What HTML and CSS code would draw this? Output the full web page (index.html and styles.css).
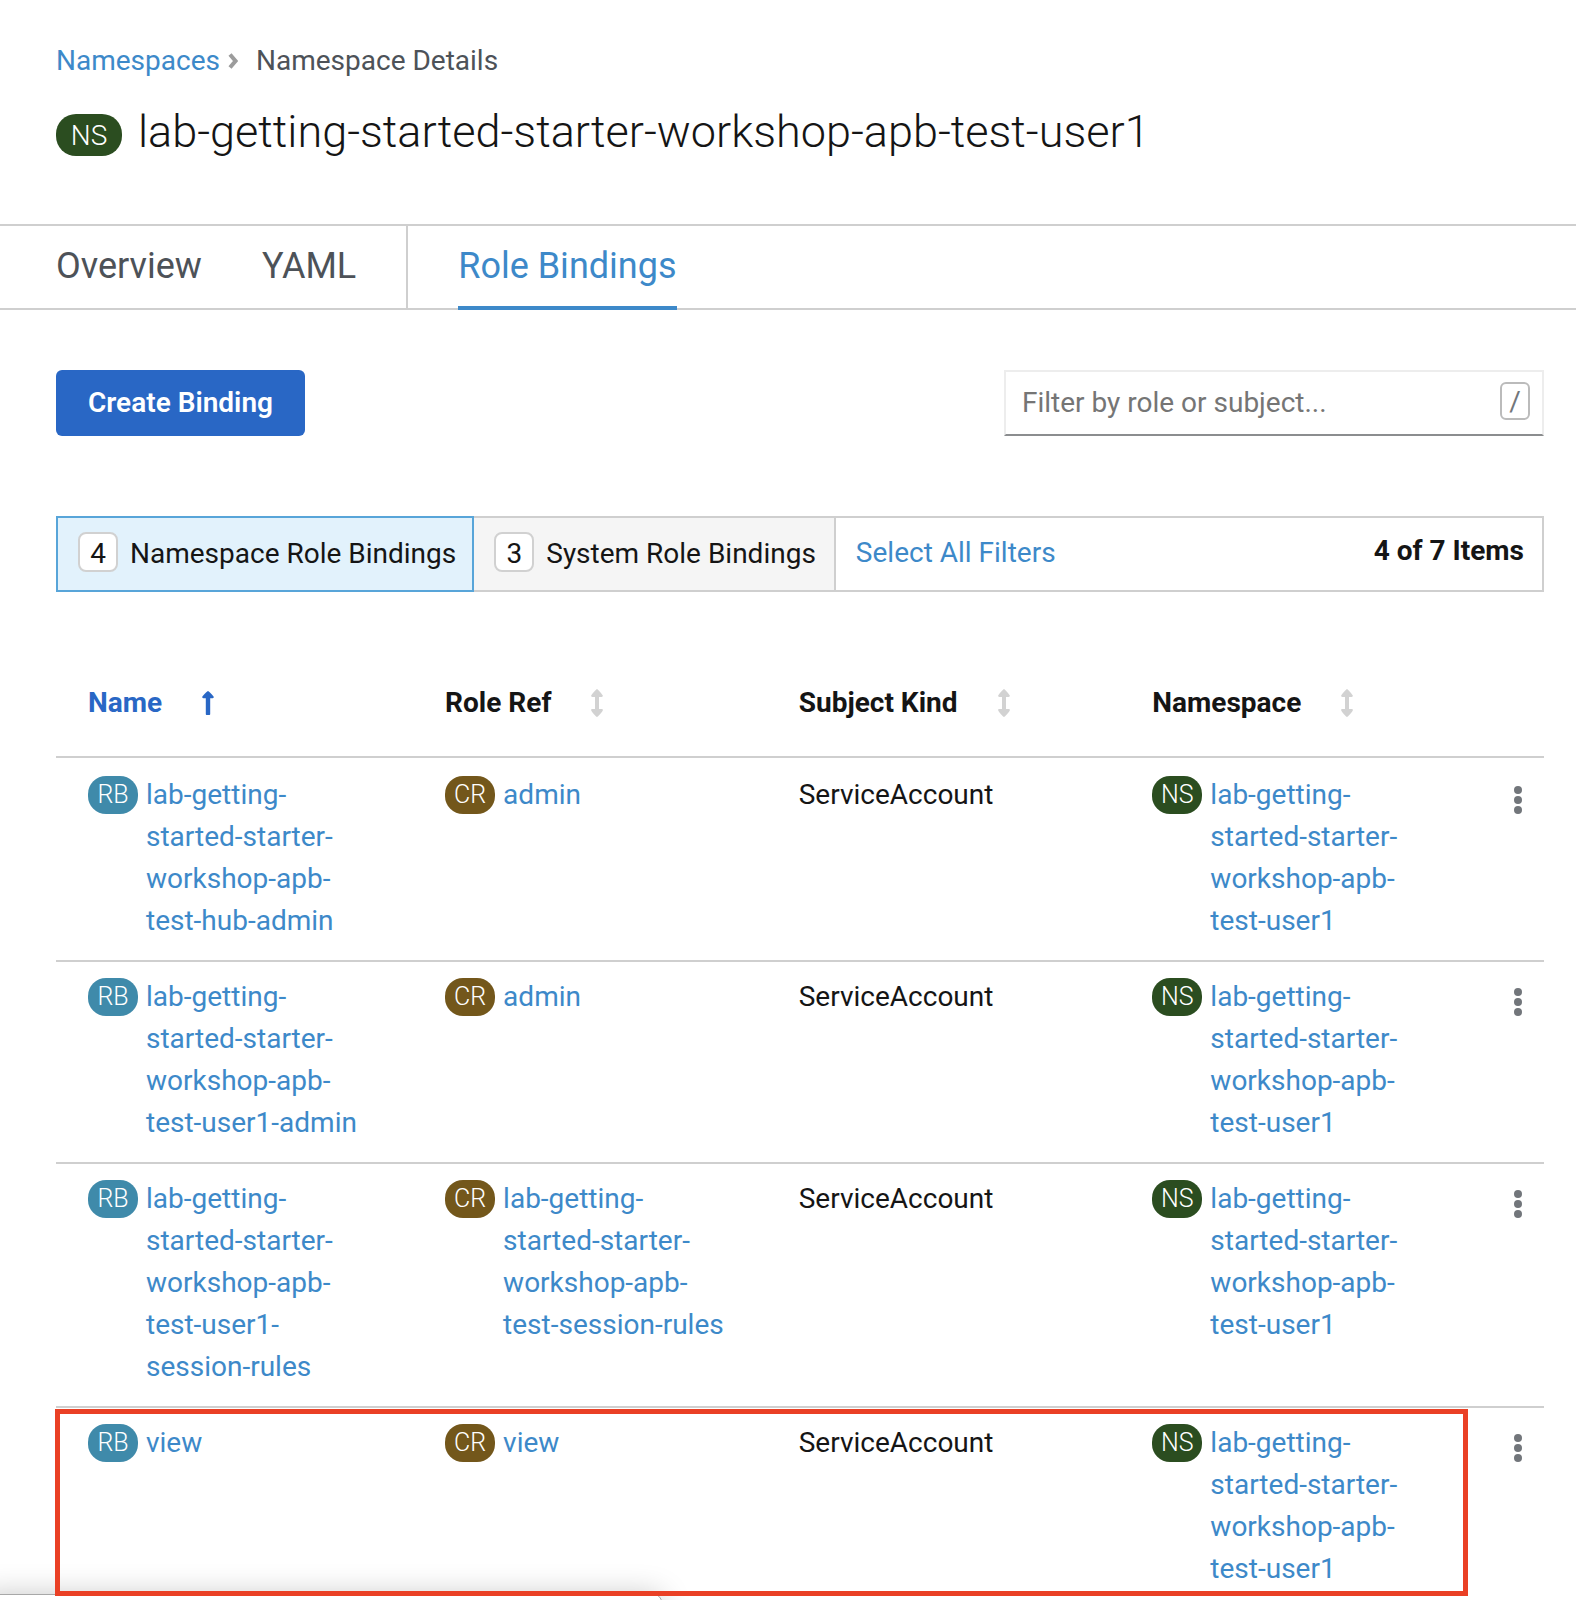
FILE: index.html
```html
<!DOCTYPE html>
<html lang="en">
<head>
<meta charset="utf-8">
<title>Namespace Details</title>
<link rel="stylesheet" href="styles.css">
</head>
<body>
<svg width="0" height="0" class="sprite" aria-hidden="true">
  <symbol id="sort" viewBox="0 0 12 28"><path d="M6 0c.6 0 5.600 5.600 5.800 6.600.2.900-.3 1.400-1.200 1.400H8v12h2.600c.9 0 1.400.5 1.200 1.400C11.600 22.400 6.600 28 6 28S.4 22.400.2 21.400C0 20.500.5 20 1.400 20H4V8H1.400C.5 8 0 7.500.2 6.600.4 5.600 5.400 0 6 0z"/></symbol>
  <symbol id="sort-up" viewBox="0 0 12 28"><path d="M6 2c.6 0 5.400 4.800 5.700 5.800.3.900-.3 1.400-1.100 1.400H8.200V25c0 .6-.4 1-1 1H4.800c-.6 0-1-.4-1-1V9.200H1.400C.6 9.200 0 8.700.3 7.800.6 6.800 5.400 2 6 2z"/></symbol>
  <symbol id="kebab" viewBox="0 0 8 28"><circle cx="4" cy="4" r="4"/><circle cx="4" cy="14" r="4"/><circle cx="4" cy="24" r="4"/></symbol>
</svg>
<main class="page">
  <header class="page-header">
    <nav class="breadcrumb" aria-label="Breadcrumb">
      <a href="#">Namespaces</a>
      <svg class="chevron" viewBox="0 0 10 16" aria-hidden="true"><path d="M2 1.500 7.500 8 2 14.500"/></svg>
      <span>Namespace Details</span>
    </nav>
    <h1 class="title"><span class="badge badge-ns badge-lg">NS</span>lab-getting-started-starter-workshop-apb-test-user1</h1>
  </header>

  <nav class="tabs" aria-label="Namespace sections">
    <div class="tab-group">
      <a class="tab" href="#">Overview</a>
      <a class="tab" href="#">YAML</a>
    </div>
    <a class="tab active" href="#">Role Bindings</a>
  </nav>

  <section class="content">
    <div class="toolbar">
      <button class="primary" type="button">Create Binding</button>
      <div class="search">
        <input type="text" placeholder="Filter by role or subject..." aria-label="Filter by role or subject">
        <kbd>/</kbd>
      </div>
    </div>

    <div class="filters">
      <button class="filter selected" type="button"><span class="count">4</span>Namespace Role Bindings</button>
      <button class="filter" type="button"><span class="count">3</span>System Role Bindings</button>
      <a class="select-all" href="#">Select All Filters</a>
      <span class="total">4 of 7 Items</span>
    </div>

    <table class="bindings">
      <thead>
        <tr>
          <th class="name"><button class="sort sorted" type="button">Name<svg><use href="#sort-up"/></svg></button></th>
          <th><button class="sort" type="button">Role Ref<svg><use href="#sort"/></svg></button></th>
          <th><button class="sort" type="button">Subject Kind<svg><use href="#sort"/></svg></button></th>
          <th><button class="sort" type="button">Namespace<svg><use href="#sort"/></svg></button></th>
          <th class="actions"></th>
        </tr>
      </thead>
      <tbody>
        <tr>
          <td><div class="resource"><span class="badge badge-rb">RB</span><a href="#">lab-getting-started-starter-workshop-apb-test-hub-admin</a></div></td>
          <td><div class="resource"><span class="badge badge-cr">CR</span><a href="#">admin</a></div></td>
          <td>ServiceAccount</td>
          <td><div class="resource"><span class="badge badge-ns">NS</span><a href="#">lab-getting-started-starter-workshop-apb-test-user1</a></div></td>
          <td class="actions"><button class="kebab" type="button" aria-label="Actions"><svg><use href="#kebab"/></svg></button></td>
        </tr>
        <tr>
          <td><div class="resource"><span class="badge badge-rb">RB</span><a href="#">lab-getting-started-starter-workshop-apb-test-user1-admin</a></div></td>
          <td><div class="resource"><span class="badge badge-cr">CR</span><a href="#">admin</a></div></td>
          <td>ServiceAccount</td>
          <td><div class="resource"><span class="badge badge-ns">NS</span><a href="#">lab-getting-started-starter-workshop-apb-test-user1</a></div></td>
          <td class="actions"><button class="kebab" type="button" aria-label="Actions"><svg><use href="#kebab"/></svg></button></td>
        </tr>
        <tr>
          <td><div class="resource"><span class="badge badge-rb">RB</span><a href="#">lab-getting-started-starter-workshop-apb-test-user1-session-rules</a></div></td>
          <td><div class="resource"><span class="badge badge-cr">CR</span><a href="#">lab-getting-started-starter-workshop-apb-test-session-rules</a></div></td>
          <td>ServiceAccount</td>
          <td><div class="resource"><span class="badge badge-ns">NS</span><a href="#">lab-getting-started-starter-workshop-apb-test-user1</a></div></td>
          <td class="actions"><button class="kebab" type="button" aria-label="Actions"><svg><use href="#kebab"/></svg></button></td>
        </tr>
        <tr class="highlighted">
          <td><div class="resource"><span class="badge badge-rb">RB</span><a href="#">view</a></div></td>
          <td><div class="resource"><span class="badge badge-cr">CR</span><a href="#">view</a></div></td>
          <td>ServiceAccount</td>
          <td><div class="resource"><span class="badge badge-ns">NS</span><a href="#">lab-getting-started-starter-workshop-apb-test-user1</a></div></td>
          <td class="actions"><button class="kebab" type="button" aria-label="Actions"><svg><use href="#kebab"/></svg></button><span class="marker"></span></td>
        </tr>
      </tbody>
    </table>
  </section>
</main>
<div class="status-bubble"></div>
</body>
</html>
```

FILE: styles.css
```css
:root {
  --link: #3d89c9;
  --blue: #2967c5;
  --line: #cfcfcf;
  --text: #151515;
  --muted: #4d5258;
}

* { box-sizing: border-box; }

body {
  margin: 0;
  background: #fff;
  color: var(--text);
  font: 400 28px/42px Roboto, "Liberation Sans", sans-serif;
}

a { color: var(--link); text-decoration: none; }

button {
  margin: 0;
  padding: 0;
  border: 0;
  background: none;
  color: inherit;
  font: inherit;
  cursor: pointer;
}

.sprite { position: absolute; }

.page { height: 100vh; overflow: hidden; }

.page-header { padding: 40px 56px 64px; }

.breadcrumb {
  display: flex;
  align-items: center;
  color: var(--muted);
}

.chevron {
  width: 10px;
  height: 16px;
  margin: 0 18px 0 8px;
  fill: none;
  stroke: #9c9c9c;
  stroke-width: 4;
}

.title {
  display: flex;
  gap: 16px;
  margin: 22px 0 0;
  font-size: 45px;
  font-weight: 300;
  line-height: 56px;
}

.badge {
  flex: none;
  width: 50px;
  height: 38px;
  margin: 2px 8px 0 0;
  border-radius: 18px;
  color: #fff;
  font-size: 25px;
  font-weight: 300;
  line-height: 38px;
  text-align: center;
}

.badge-lg {
  width: 66px;
  height: 42px;
  margin: 10px 0 0;
  border-radius: 20px;
  font-size: 28px;
  line-height: 44px;
}

.badge-ns { background: #2b4d20; }
.badge-rb { background: #3f8aaa; }
.badge-cr { background: #73571b; }

.tabs {
  display: flex;
  padding-left: 56px;
  border-top: 2px solid var(--line);
  border-bottom: 2px solid var(--line);
}

.tab-group {
  display: flex;
  gap: 60px;
  margin-right: 50px;
  padding-right: 50px;
  border-right: 2px solid var(--line);
}

.tab {
  margin-bottom: -2px;
  border-bottom: 4px solid transparent;
  color: var(--muted);
  font-size: 36px;
  line-height: 80px;
}

.tab.active { border-color: var(--link); color: var(--link); }

.content { padding: 60px 32px 0 56px; }

.toolbar { display: flex; justify-content: space-between; }

.primary {
  height: 66px;
  padding: 0 32px;
  border-radius: 6px;
  background: var(--blue);
  color: #fff;
  font-weight: 600;
}

.search { position: relative; width: 540px; }

.search input {
  width: 100%;
  height: 66px;
  padding: 0 60px 2px 16px;
  border: 2px solid #ededed;
  border-bottom-color: #8b8d8f;
  border-radius: 0;
  background: #fff;
  color: var(--text);
  font: inherit;
}

.search input::placeholder { color: #757575; opacity: 1; }

.search kbd {
  position: absolute;
  top: 12px;
  right: 14px;
  width: 30px;
  height: 38px;
  border: 2px solid #bbb;
  border-radius: 6px;
  color: #72767b;
  font: 400 28px/36px Roboto, sans-serif;
  text-align: center;
}

.filters {
  display: flex;
  height: 76px;
  margin-top: 80px;
  border: 2px solid var(--line);
}

.filter {
  display: flex;
  align-items: center;
  gap: 12px;
  padding: 0 18px 0 20px;
  border-right: 2px solid var(--line);
  background: #f5f5f5;
}

.filter.selected {
  margin: -2px 0 -2px -2px;
  padding-right: 16px;
  border: 2px solid #58a5d9;
  background: #e2f2fc;
}

.count {
  width: 40px;
  height: 40px;
  margin-bottom: 4px;
  border: 2px solid #d1d1d1;
  border-radius: 8px;
  background: #fff;
  line-height: 40px;
}

.select-all { padding: 14px 20px; }

.total {
  margin-left: auto;
  padding: 12px 18px;
  font-weight: 700;
}

.bindings {
  width: 100%;
  margin-top: 40px;
  border-collapse: separate;
  border-spacing: 0;
  table-layout: fixed;
}

.bindings th {
  padding: 50px 0 32px 32px;
  border-bottom: 2px solid var(--line);
  text-align: left;
}

.bindings .name { width: 24%; }
.bindings .actions { width: 70px; padding-right: 0; }

.bindings td {
  padding: 14px 38px 18px 32px;
  border-bottom: 2px solid var(--line);
  vertical-align: top;
}

.bindings tbody tr:first-child td { padding-top: 16px; }

.sort {
  display: flex;
  align-items: center;
  gap: 40px;
  font-weight: 700;
}

.sort svg { width: 12px; height: 28px; fill: #d2d2d2; }
.sort.sorted { color: var(--blue); }
.sort.sorted svg { fill: var(--blue); }

.resource { display: flex; }
.resource a { min-width: 0; }

.kebab {
  display: flex;
  align-items: center;
  justify-content: center;
  width: 24px;
  height: 52px;
}

.kebab svg { width: 8px; height: 28px; fill: #72767b; }

.highlighted { position: relative; }

.marker {
  position: absolute;
  z-index: 2;
  inset: 1px 76px 14px -1px;
  border: 5px solid #ea4025;
  pointer-events: none;
}

/* Link status bubble, mostly below the bottom edge of the window */
.status-bubble {
  position: fixed;
  z-index: 1;
  bottom: -54px;
  left: -20px;
  width: 682px;
  height: 60px;
  border: 1px solid #a8a8a8;
  border-radius: 8px;
  background: #fff;
  box-shadow: 0 0 30px rgba(0, 0, 0, 0.22);
}
```
